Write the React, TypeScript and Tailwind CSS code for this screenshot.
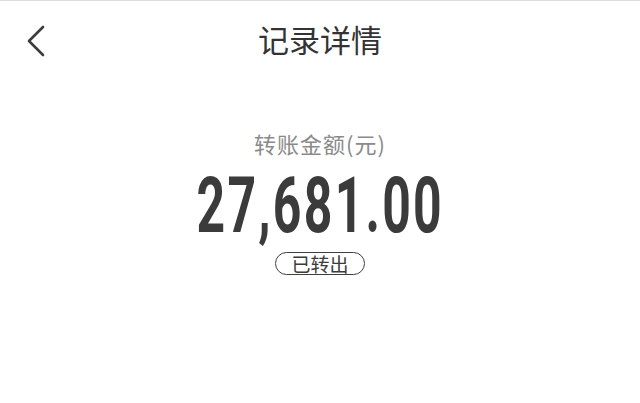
export default function App() {
  const cjk = { fontFamily: '"Noto Sans CJK SC", "Noto Sans", sans-serif' };

  return (
    <div className="w-[640px] h-[403px] bg-white border-t border-[#dcdcdc] overflow-hidden" style={cjk}>
      {/* Header */}
      <div className="relative h-[78px] flex items-center justify-center">
        <button className="absolute left-[24px] top-[22px] w-[24px] h-[36px] flex items-center justify-center">
          <svg width="20" height="32" viewBox="0 0 20 32" fill="none">
            <path d="M17 2 L3 16 L17 30" stroke="#3c3c3c" strokeWidth="2.6" strokeLinecap="round" strokeLinejoin="round" />
          </svg>
        </button>
        <h1 className="text-[31px] leading-none text-[#333333] font-normal -mt-[4px]">记录详情</h1>
      </div>

      {/* Amount */}
      <div className="flex flex-col items-center pt-[52px]">
        <div className="text-[22px] leading-[24px] text-[#8a8a8a] tracking-[1px]">转账金额(元)</div>
        <div className="mt-[12px] h-[78px] flex items-center justify-center">
          <span
            className="inline-block scale-x-[0.64] text-[78px] leading-none font-bold text-[#3b3b3b] tracking-[3.5px]"
            style={{ fontFamily: 'Roboto, "Liberation Sans", sans-serif' }}
          >
            27,681.00
          </span>
        </div>
        <div className="mt-[7px] h-[23px] px-[15px] rounded-full border-[1.5px] border-[#3f3f3f] flex items-center">
          <span className="text-[19px] leading-none text-[#3c3c3c]">已转出</span>
        </div>
      </div>
    </div>
  );
}
